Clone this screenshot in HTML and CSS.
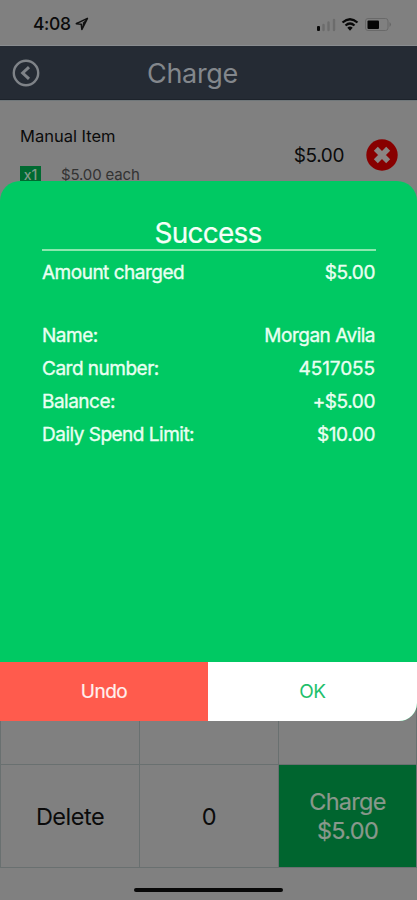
FILE: index.html
```html
<!DOCTYPE html>
<html lang="en">
<head>
<meta charset="utf-8">
<title>Charge</title>
<link rel="stylesheet" href="styles.css">
</head>
<body>
<div class="screen">
  <div class="status">
    <span class="time">4:08</span>
    <svg class="location" width="14" height="14" viewBox="0 0 14 14"><path d="M12.4 1.4 1.3 6.600l5 .7.6 5.200z" fill="none" stroke="#111" stroke-width="1.600" stroke-linejoin="round"/><path d="M12.4 1.4 8 5.500l-1.100 7z" fill="#111"/></svg>
    <svg class="indicators" width="76" height="16" viewBox="0 0 76 16">
      <rect x="1" y="10" width="3" height="5" rx="1" fill="#080808"/>
      <path d="M7.5 9v5M12.500 6.500v7.500M18 4v10" stroke="#6c6c6c" stroke-width="2.400" stroke-linecap="round"/>
      <path d="M26.500 6.500q7.500-6.600 15 0M29.500 9.500q4.500-4 9 0" fill="none" stroke="#080808" stroke-width="2.300"/>
      <path d="M31.300 11.700q2.700-2.200 5.400 0L34 14.700z" fill="#080808"/>
      <rect x="49.500" y="2.500" width="22.500" height="12" rx="2.500" fill="none" stroke="#696969" stroke-width="1"/>
      <rect x="51.500" y="4.500" width="11.500" height="8.500" rx="1" fill="#050505"/>
      <path d="M73.500 6q3 2.500 0 5z" fill="#666"/>
    </svg>
  </div>
  <header class="header">
    <svg class="back" width="28" height="28" viewBox="0 0 28 28" fill="none" stroke="#7f8388"><circle cx="14" cy="14" r="12.200" stroke-width="2.400"/><path d="M17 8.200 10.700 14l6.300 5.800" stroke-width="3"/></svg>
    <h1 class="title">Charge</h1>
  </header>
  <section class="item">
    <div class="item-info">
      <div class="item-name">Manual Item</div>
      <div class="item-detail"><span class="qty">x1</span><span class="each">$5.00 each</span></div>
    </div>
    <div class="item-price">$5.00</div>
    <svg class="remove" width="32" height="32" viewBox="0 0 32 32"><circle cx="16" cy="16" r="15.700" fill="#880000"/><path d="m11.800 11.800 8.400 8.400m0-8.400-8.400 8.400" stroke="#8b8583" stroke-width="5.600" stroke-linecap="square"/></svg>
  </section>
  <div class="keypad">
    <div class="key upper">7</div><div class="key upper">8</div><div class="key upper">9</div>
    <div class="key">Delete</div><div class="key">0</div><div class="key charge"><span>Charge</span><span>$5.00</span></div>
  </div>
  <div class="home"></div>
  <div class="modal">
    <div class="modal-body">
      <h2 class="heading">Success</h2>
      <div class="row first"><span>Amount charged</span><span class="sum">$5.00</span></div>
      <div class="row"><span>Name:</span><span>Morgan Avila</span></div>
      <div class="row"><span>Card number:</span><span class="number">4517055</span></div>
      <div class="row"><span>Balance:</span><span class="sum">+$5.00</span></div>
      <div class="row"><span>Daily Spend Limit:</span><span class="sum">$10.00</span></div>
    </div>
    <div class="actions"><div class="undo">Undo</div><div class="ok">OK</div></div>
  </div>
</div>
</body>
</html>
```
FILE: styles.css
```css
* { box-sizing: border-box; }
body { margin: 0; font-family: Inter, "Liberation Sans", sans-serif; }
h1, h2 { margin: 0; font-weight: 400; }
svg { display: block; flex: none; }
.screen { position: relative; display: flex; flex-direction: column; width: 417px; height: 900px; overflow: hidden; background: #808080; color: #0b0b0b; }
.status { display: flex; align-items: center; height: 46px; padding: 2px 23px 0 33px; border-bottom: 1px solid #8a8d90; }
.time { width: 38px; font-size: 17.500px; font-weight: 500; letter-spacing: -0.4px; }
.location { margin-left: 4px; }
.indicators { margin-left: auto; margin-right: 2px; }
.header { display: flex; align-items: center; height: 54px; padding: 0 12px; background: #252b34; border-bottom: 1px solid #1d232b; }
.title { flex: 1; margin: 2px 60px 0 0; text-align: center; font-size: 27px; letter-spacing: -0.3px; color: #83878c; }
.item { display: flex; align-items: flex-start; height: 562px; padding: 25px 19px 0 20px; border-top: 1px solid #70777a; }
.item-info { flex: 1; }
.item-name { font-size: 16.500px; line-height: 20px; letter-spacing: 0; }
.item-detail { display: flex; align-items: center; height: 20px; margin-top: 19px; }
.qty { width: 21px; height: 18px; background: #006a31; color: #829a8b; font-size: 14px; font-weight: 500; line-height: 17px; text-align: center; }
.each { margin-left: 20px; font-size: 15px; line-height: 18px; letter-spacing: -0.15px; color: #333; }
.item-price { margin-top: 18px; margin-right: 22px; font-size: 19px; line-height: 24px; letter-spacing: -0.4px; }
.remove { margin-top: 13px; }
.keypad { display: grid; grid-template-columns: 138px 138px 137px; grid-template-rows: 102px 102px; gap: 1px; flex: none; height: 206px; padding-left: 1px; border-bottom: 1px solid #697070; background: #697070; width: 417px; }
.key { display: flex; flex-direction: column; align-items: center; justify-content: center; background: #808080; font-size: 23.500px; line-height: 29px; letter-spacing: -0.5px; }
.upper { padding-bottom: 1px; }
.charge { background: #00652f; color: #89988c; letter-spacing: -0.7px; -webkit-text-stroke: 0.2px; }
.home { width: 149px; height: 4px; margin: 20px auto 0; border-radius: 2px; background: #080808; }
.modal { position: absolute; top: 181px; left: 0; width: 417px; height: 540px; display: flex; flex-direction: column; overflow: hidden; border-radius: 20px 20px 18px 0; background: #00c963; color: #e9fff1; }
.modal-body { flex: 1; padding: 34px 41px 0 42px; }
.heading { height: 36px; padding-right: 2px; border-bottom: 2px solid #8be8ae; text-align: center; font-size: 28px; line-height: 36px; letter-spacing: -0.8px; color: #f5fff8; -webkit-text-stroke: 0.2px; }
.row { display: flex; justify-content: space-between; height: 33px; padding-right: 1px; font-size: 19px; line-height: 34px; letter-spacing: -0.5px; -webkit-text-stroke: 0.35px; }
.first { height: 63px; padding-top: 5px; margin-bottom: 5px; }
.sum { letter-spacing: -0.4px; }
.number { letter-spacing: -0.1px; }
.actions { display: flex; height: 59px; font-size: 19px; line-height: 59px; text-align: center; letter-spacing: -0.5px; }
.undo { width: 208px; background: #ff5b4d; color: #fff0ef; -webkit-text-stroke: 0.2px; }
.ok { flex: 1; background: #fff; color: #1fbf6c; }
```
